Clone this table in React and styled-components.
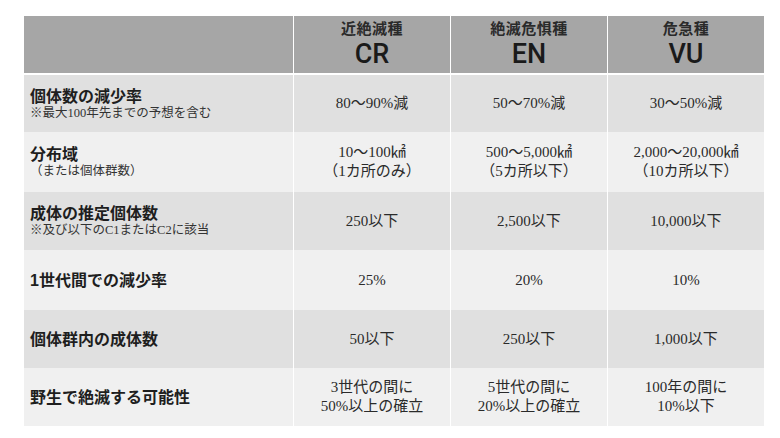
import React from 'react';
import styled, { createGlobalStyle } from 'styled-components';

const GlobalStyle = createGlobalStyle`
  html, body {
    margin: 0;
    padding: 0;
    background: #fff;
  }
  body {
    font-family: "Liberation Sans", "Noto Sans CJK JP", sans-serif;
    color: #222;
  }
`;

const Page = styled.div`
  width: 780px;
  height: 438px;
  padding: 16px 16px 0 24px;
  box-sizing: border-box;
`;

const Table = styled.div`
  display: grid;
  grid-template-columns: 269px 156px 156px 156px;
  grid-template-rows: 59px 57px 60px 58px 60px 58px 58px;
  column-gap: 1px;
  width: 740px;
`;

const HeadCell = styled.div`
  background: #a6a6a6;
  margin-bottom: 2px;
  display: flex;
  flex-direction: column;
  align-items: center;
  justify-content: center;
`;

const HeadName = styled.div`
  font-family: "Liberation Sans", "Noto Sans CJK JP", sans-serif;
  font-size: 15px;
  font-weight: 700;
  line-height: 18px;
  color: #2a2a2a;
  letter-spacing: 0.5px;
`;

const HeadCode = styled.div`
  font-family: Roboto, "Liberation Sans", sans-serif;
  font-size: 27px;
  font-weight: 500;
  line-height: 32px;
  color: #1a1a1a;
`;

const LabelCell = styled.div`
  background: ${({ $dark }) => ($dark ? '#e0e0e0' : '#f0f0f0')};
  display: flex;
  flex-direction: column;
  justify-content: center;
  padding-left: 6px;
`;

const Label = styled.div`
  font-family: "Liberation Sans", "Noto Sans CJK JP", sans-serif;
  font-size: 16px;
  font-weight: 700;
  line-height: 19px;
  color: #1e1e1e;
`;

const Note = styled.div`
  font-family: "Liberation Serif", "Noto Sans CJK JP", serif;
  font-size: 12.5px;
  line-height: 15px;
  color: #333;
`;

const DataCell = styled.div`
  background: ${({ $dark }) => ($dark ? '#e0e0e0' : '#f0f0f0')};
  display: flex;
  flex-direction: column;
  align-items: center;
  justify-content: center;
  font-family: "Liberation Serif", "Noto Sans CJK JP", serif;
  font-size: 15px;
  line-height: 19px;
  color: #2a2a2a;
  text-align: center;
`;

const heads = [
  ['近絶滅種', 'CR'],
  ['絶滅危惧種', 'EN'],
  ['危急種', 'VU'],
];

const rows = [
  {
    label: '個体数の減少率',
    note: '※最大100年先までの予想を含む',
    cells: [['80～90%減'], ['50～70%減'], ['30～50%減']],
  },
  {
    label: '分布域',
    note: '（または個体群数）',
    cells: [
      ['10～100㎢', '（1カ所のみ）'],
      ['500～5,000㎢', '（5カ所以下）'],
      ['2,000～20,000㎢', '（10カ所以下）'],
    ],
  },
  {
    label: '成体の推定個体数',
    note: '※及び以下のC1またはC2に該当',
    cells: [['250以下'], ['2,500以下'], ['10,000以下']],
  },
  { label: '1世代間での減少率', cells: [['25%'], ['20%'], ['10%']] },
  { label: '個体群内の成体数', cells: [['50以下'], ['250以下'], ['1,000以下']] },
  {
    label: '野生で絶滅する可能性',
    cells: [
      ['3世代の間に', '50%以上の確立'],
      ['5世代の間に', '20%以上の確立'],
      ['100年の間に', '10%以下'],
    ],
  },
];

export default function App() {
  return (
    <>
      <GlobalStyle />
      <Page>
        <Table>
          <HeadCell />
          {heads.map(([name, code]) => (
            <HeadCell key={code}>
              <HeadName>{name}</HeadName>
              <HeadCode>{code}</HeadCode>
            </HeadCell>
          ))}
          {rows.map((row, i) => {
            const dark = i % 2 === 0;
            return (
              <React.Fragment key={row.label}>
                <LabelCell $dark={dark}>
                  <Label>{row.label}</Label>
                  {row.note && <Note>{row.note}</Note>}
                </LabelCell>
                {row.cells.map((lines, j) => (
                  <DataCell key={j} $dark={dark}>
                    {lines.map(line => (
                      <div key={line}>{line}</div>
                    ))}
                  </DataCell>
                ))}
              </React.Fragment>
            );
          })}
        </Table>
      </Page>
    </>
  );
}
